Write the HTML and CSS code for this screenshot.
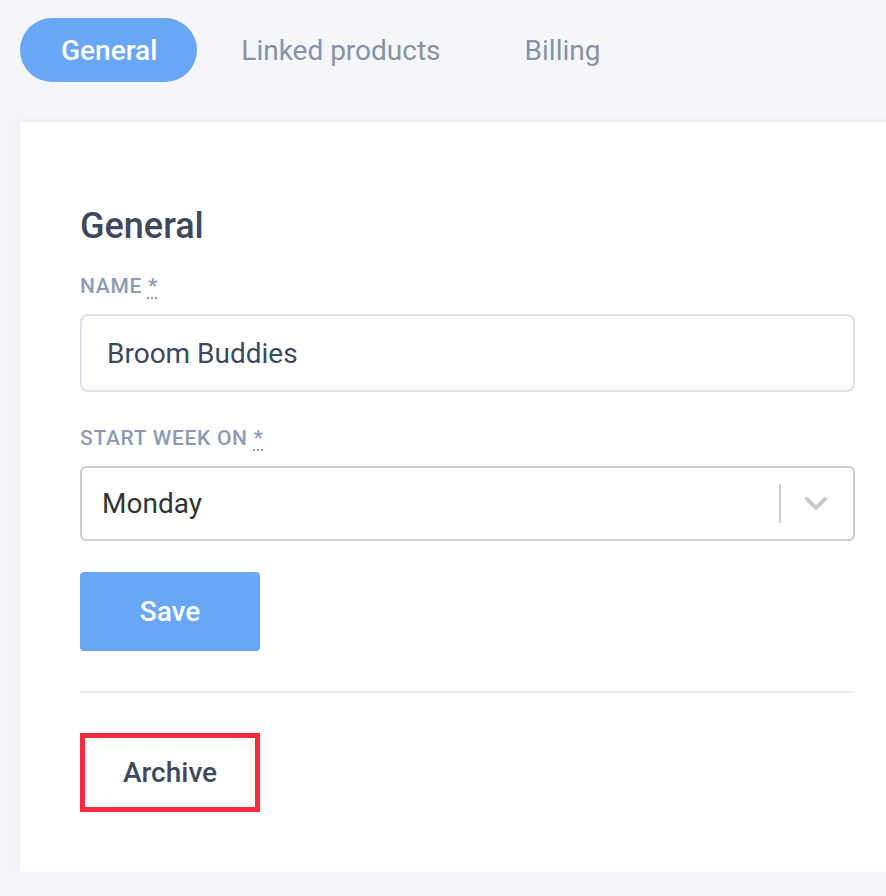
FILE: index.html
```html
<!DOCTYPE html>
<html lang="en">
<head>
<meta charset="utf-8">
<title>Settings</title>
<link rel="stylesheet" href="styles.css">
</head>
<body>
<nav class="tabs">
  <a class="tab tab-active">General</a>
  <a class="tab">Linked products</a>
  <a class="tab">Billing</a>
</nav>
<main class="card">
  <h2 class="card-title">General</h2>
  <form class="form">
    <label class="label">NAME <abbr class="req" title="required">*</abbr></label>
    <div class="input">Broom Buddies</div>
    <label class="label label-second">START WEEK ON <abbr class="req" title="required">*</abbr></label>
    <div class="select">
      <span class="select-value">Monday</span>
      <span class="select-indicators">
        <span class="select-sep"></span>
        <svg class="chevron" width="24" height="16" viewBox="0 0 24 16"><path d="M3 3 L12 12 L21 3" fill="none" stroke="#cccccc" stroke-width="4" stroke-linecap="round" stroke-linejoin="round"/></svg>
      </span>
    </div>
    <button type="button" class="btn btn-save">Save</button>
  </form>
  <hr class="divider">
  <button type="button" class="btn btn-archive">Archive</button>
</main>
</body>
</html>
```
FILE: styles.css
```css
html, body {
  margin: 0;
  background: #f5f6fa;
  overflow: hidden;
}
body {
  padding: 18px 0 0 20px;
  font-family: Roboto, "Liberation Sans", sans-serif;
  width: 1000px;
}
.tabs {
  display: flex;
  gap: 4px;
  height: 64px;
}
.tab {
  display: flex;
  align-items: center;
  padding: 0 40px;
  font-size: 28px;
  color: #8592a7;
  border-radius: 32px;
}
.tab-active {
  padding: 0 40px 0 41px;
  background: #68a6f6;
  color: #ffffff;
  font-weight: 500;
}
.card {
  display: block;
  margin-top: 40px;
  width: 775px;
  padding: 84px 60px 60px 60px;
  background: #ffffff;
  box-shadow: 0 0 8px rgba(40, 50, 80, 0.08);
}
.card-title {
  margin: 0;
  font-size: 36px;
  line-height: 40px;
  font-weight: 500;
  color: #3e4a5c;
}
.form {
  display: flex;
  flex-direction: column;
  align-items: flex-start;
  margin-top: 28px;
}
.label {
  font-size: 21px;
  line-height: 24px;
  font-weight: 500;
  letter-spacing: 0.7px;
  color: #8f9bb0;
  margin-bottom: 16px;
}
.label-second {
  margin-top: 34px;
}
.req {
  text-decoration: underline dotted;
  text-underline-offset: 4px;
  cursor: help;
}
.input {
  box-sizing: border-box;
  width: 775px;
  height: 78px;
  border: 2px solid #dde1ea;
  border-radius: 8px;
  padding: 0 25px;
  display: flex;
  align-items: center;
  font-size: 28px;
  color: #3e4a5c;
}
.select {
  box-sizing: border-box;
  width: 775px;
  height: 75px;
  border: 2px solid #cccccc;
  border-radius: 6px;
  display: flex;
  align-items: center;
  justify-content: space-between;
  padding-left: 20px;
}
.select-value {
  font-size: 28px;
  color: #333333;
}
.select-indicators {
  display: flex;
  align-items: center;
  height: 100%;
}
.select-sep {
  width: 2px;
  height: 39px;
  background: #cccccc;
}
.chevron {
  margin: 0 25px 0 23px;
  display: block;
}
.btn {
  box-sizing: border-box;
  width: 180px;
  height: 79px;
  font-family: Roboto, "Liberation Sans", sans-serif;
  font-size: 28px;
  font-weight: 500;
  cursor: pointer;
}
.btn-save {
  margin-top: 31px;
  border: none;
  border-radius: 4px;
  background: #68a6f6;
  color: #ffffff;
}
.divider {
  margin: 40px 0 40px 0;
  border: none;
  height: 2px;
  background: #ebebeb;
}
.btn-archive {
  display: block;
  border: 5px solid #fc2a3d;
  background: #ffffff;
  color: #3e4a5c;
}
```
